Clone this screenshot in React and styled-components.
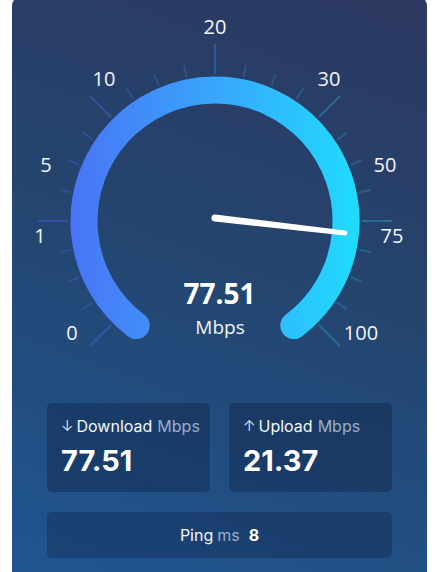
import React from 'react';
import styled, { createGlobalStyle } from 'styled-components';

const GlobalStyle = createGlobalStyle`
  html, body {
    margin: 0;
    padding: 0;
    background: #ffffff;
    overflow: hidden;
  }
  body {
    font-family: 'Inter', 'Open Sans', sans-serif;
  }
`;

const Panel = styled.div`
  margin: -4px 13px 0 12px;
  border-radius: 10px;
  background: linear-gradient(200deg, #2c3860 0%, #24456f 45%, #1f5794 100%);
  overflow: hidden;
`;

const GaugeSvg = styled.svg`
  display: block;
  width: 415px;
  height: 384px;
`;

const Body = styled.div`
  padding: 23px 35px 40px;
`;

const StatsRow = styled.div`
  display: grid;
  grid-template-columns: repeat(2, minmax(0, 1fr));
  gap: 19px;
`;

const Card = styled.div`
  height: 89px;
  box-sizing: border-box;
  padding: 13px 14px 0;
  border-radius: 5px;
  background: rgba(14, 32, 64, 0.38);
  display: flex;
  flex-direction: column;
  gap: 7px;
`;

const CardLabel = styled.div`
  font-size: 16px;
  line-height: 20px;
  color: #f4f7fb;
  display: flex;
  align-items: center;
  gap: 3px;
  white-space: nowrap;
`;

const Unit = styled.span`
  color: #9aaec9;
  margin-left: ${(p) => p.$gap || 0}px;
`;

const Arrow = styled.span`
  font-size: 15px;
  font-weight: 300;
  color: #f4f7fb;
`;

const CardValue = styled.div`
  font-size: 29px;
  line-height: 35px;
  font-weight: 700;
  color: #ffffff;
`;

const PingBar = styled.div`
  margin-top: 20px;
  height: 46px;
  border-radius: 5px;
  background: rgba(14, 32, 64, 0.34);
  display: flex;
  align-items: center;
  justify-content: center;
  font-size: 16px;
  color: #f4f7fb;
`;

const PingValue = styled.span`
  font-weight: 700;
  color: #ffffff;
  margin-left: 9px;
`;

const CX = 215;
const CY = 221;

const ticks = [];
for (let i = 0; i <= 24; i++) {
  const deg = 225 - i * 11.25;
  const major = i % 4 === 0;
  const a = (deg * Math.PI) / 180;
  const r1 = 147;
  const r2 = major ? 177 : 159;
  ticks.push({
    x1: CX + r1 * Math.cos(a),
    y1: CY - r1 * Math.sin(a),
    x2: CX + r2 * Math.cos(a),
    y2: CY - r2 * Math.sin(a),
    major,
  });
}

const labels = [
  { t: '0', x: 72, y: 332 },
  { t: '1', x: 40, y: 235 },
  { t: '5', x: 46, y: 164 },
  { t: '10', x: 104, y: 78 },
  { t: '20', x: 215, y: 26 },
  { t: '30', x: 329, y: 78 },
  { t: '50', x: 385, y: 164 },
  { t: '75', x: 392, y: 235 },
  { t: '100', x: 361, y: 332 },
];

function Gauge() {
  return (
    <GaugeSvg viewBox="12 -4 415 384">
      <defs>
        <linearGradient id="arcGrad" gradientUnits="userSpaceOnUse" x1="70" y1="0" x2="360" y2="0">
          <stop offset="0" stopColor="#4a74f6" />
          <stop offset="0.5" stopColor="#38a6fb" />
          <stop offset="1" stopColor="#1fdcfd" />
        </linearGradient>
        <linearGradient id="tickGrad" gradientUnits="userSpaceOnUse" x1="40" y1="0" x2="390" y2="0">
          <stop offset="0" stopColor="#5a58f0" />
          <stop offset="0.5" stopColor="#3a86e8" />
          <stop offset="1" stopColor="#22b8e0" />
        </linearGradient>
      </defs>

      {ticks.map((k, i) => (
        <line
          key={i}
          x1={k.x1}
          y1={k.y1}
          x2={k.x2}
          y2={k.y2}
          stroke="url(#tickGrad)"
          strokeOpacity={k.major ? 0.38 : 0.28}
          strokeWidth={2}
        />
      ))}

      <path
        d="M136.2 325.6 A131 131 0 1 1 293.8 325.6"
        fill="none"
        stroke="url(#arcGrad)"
        strokeWidth="27"
        strokeLinecap="round"
      />

      {labels.map((l) => (
        <text
          key={l.t}
          x={l.x}
          y={l.y}
          textAnchor="middle"
          dominantBaseline="central"
          fontFamily="'Open Sans', sans-serif"
          fontSize="20"
          fill="#f2f5fa"
        >
          {l.t}
        </text>
      ))}

      <path
        d="M215.4 214.52 L345.29 230.52 A2.5 2.5 0 0 1 344.71 235.48 L214.6 221.48 A3.5 3.5 0 0 1 215.4 214.52 Z"
        fill="#ffffff"
      />

      <text
        x="219.5"
        y="293"
        textAnchor="middle"
        dominantBaseline="central"
        fontFamily="'Open Sans', sans-serif"
        fontWeight="700"
        fontSize="28"
        fill="#ffffff"
      >
        77.51
      </text>
      <text
        x="220"
        y="327"
        textAnchor="middle"
        dominantBaseline="central"
        fontFamily="'Open Sans', sans-serif"
        fontSize="19"
        fill="#f2f5fa"
      >
        Mbps
      </text>
    </GaugeSvg>
  );
}

export default function App() {
  return (
    <>
      <GlobalStyle />
      <Panel>
        <Gauge />
        <Body>
          <StatsRow>
            <Card>
              <CardLabel>
                <Arrow>↓</Arrow>Download<Unit $gap={2}>Mbps</Unit>
              </CardLabel>
              <CardValue>77.51</CardValue>
            </Card>
            <Card>
              <CardLabel>
                <Arrow>↑</Arrow>Upload<Unit $gap={2}>Mbps</Unit>
              </CardLabel>
              <CardValue>21.37</CardValue>
            </Card>
          </StatsRow>
          <PingBar>
            Ping<Unit $gap={4}>ms</Unit>
            <PingValue>8</PingValue>
          </PingBar>
        </Body>
      </Panel>
    </>
  );
}
